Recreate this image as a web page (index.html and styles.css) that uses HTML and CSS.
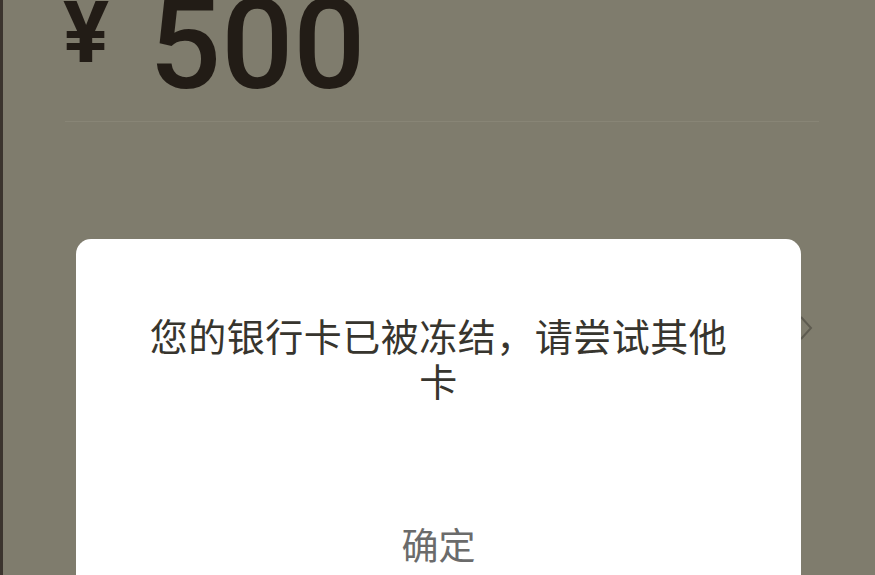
FILE: index.html
```html
<!DOCTYPE html>
<html lang="zh-CN">
<head>
<meta charset="utf-8">
<link rel="stylesheet" href="styles.css">
</head>
<body>
<div class="page">
  <div class="amount">
    <span class="currency">¥</span>
    <span class="value">500</span>
  </div>
  <div class="divider"></div>
  <div class="row">
    <svg class="chev" width="14" height="26" viewBox="0 0 14 26"><path d="M2 2 L12 13 L2 24" fill="none" stroke="#5e5b50" stroke-width="2"/></svg>
  </div>
</div>
<div class="dialog">
  <p class="message">您的银行卡已被冻结，请尝试其他卡</p>
  <div class="action">确定</div>
</div>
</body>
</html>
```
FILE: styles.css
```css
html, body {
  margin: 0;
  padding: 0;
  width: 875px;
  height: 575px;
  overflow: hidden;
  background: #7f7c6d;
}
body {
  font-family: "Noto Sans CJK SC", "Noto Sans", sans-serif;
  border-left: 3px solid #3b342e;
  box-sizing: border-box;
  position: relative;
}
.page {
  padding-left: 60px;
  padding-right: 56px;
}
.amount {
  display: flex;
  align-items: flex-start;
  margin-top: -27px;
  height: 148px;
}
.currency {
  font-family: Roboto, "Liberation Sans", sans-serif;
  font-weight: 700;
  font-size: 86px;
  line-height: 1;
  color: #221c16;
  margin-top: 17px;
  width: 86px;
}
.value {
  font-family: Roboto, "Liberation Sans", sans-serif;
  font-weight: 500;
  font-size: 127px;
  line-height: 1;
  color: #221c16;
  margin-top: 8px;
  letter-spacing: 0px;
}
.divider {
  height: 1px;
  background: #888576;
  margin-left: 2px;
}
.row {
  display: flex;
  justify-content: flex-end;
  padding-top: 193px;
}
.chev {
  display: block;
  margin-right: 6px;
}
.dialog {
  position: absolute;
  left: 73px;
  top: 239px;
  width: 725px;
  height: 360px;
  background: #ffffff;
  border-radius: 15px;
  box-sizing: border-box;
  padding: 73px 60px 0;
  text-align: center;
}
.message {
  margin: 0;
  font-size: 38px;
  line-height: 45px;
  letter-spacing: 0.5px;
  color: #37352e;
}
.action {
  margin-top: 120px;
  font-size: 37px;
  line-height: 45px;
  color: #6b6b6b;
}
```
